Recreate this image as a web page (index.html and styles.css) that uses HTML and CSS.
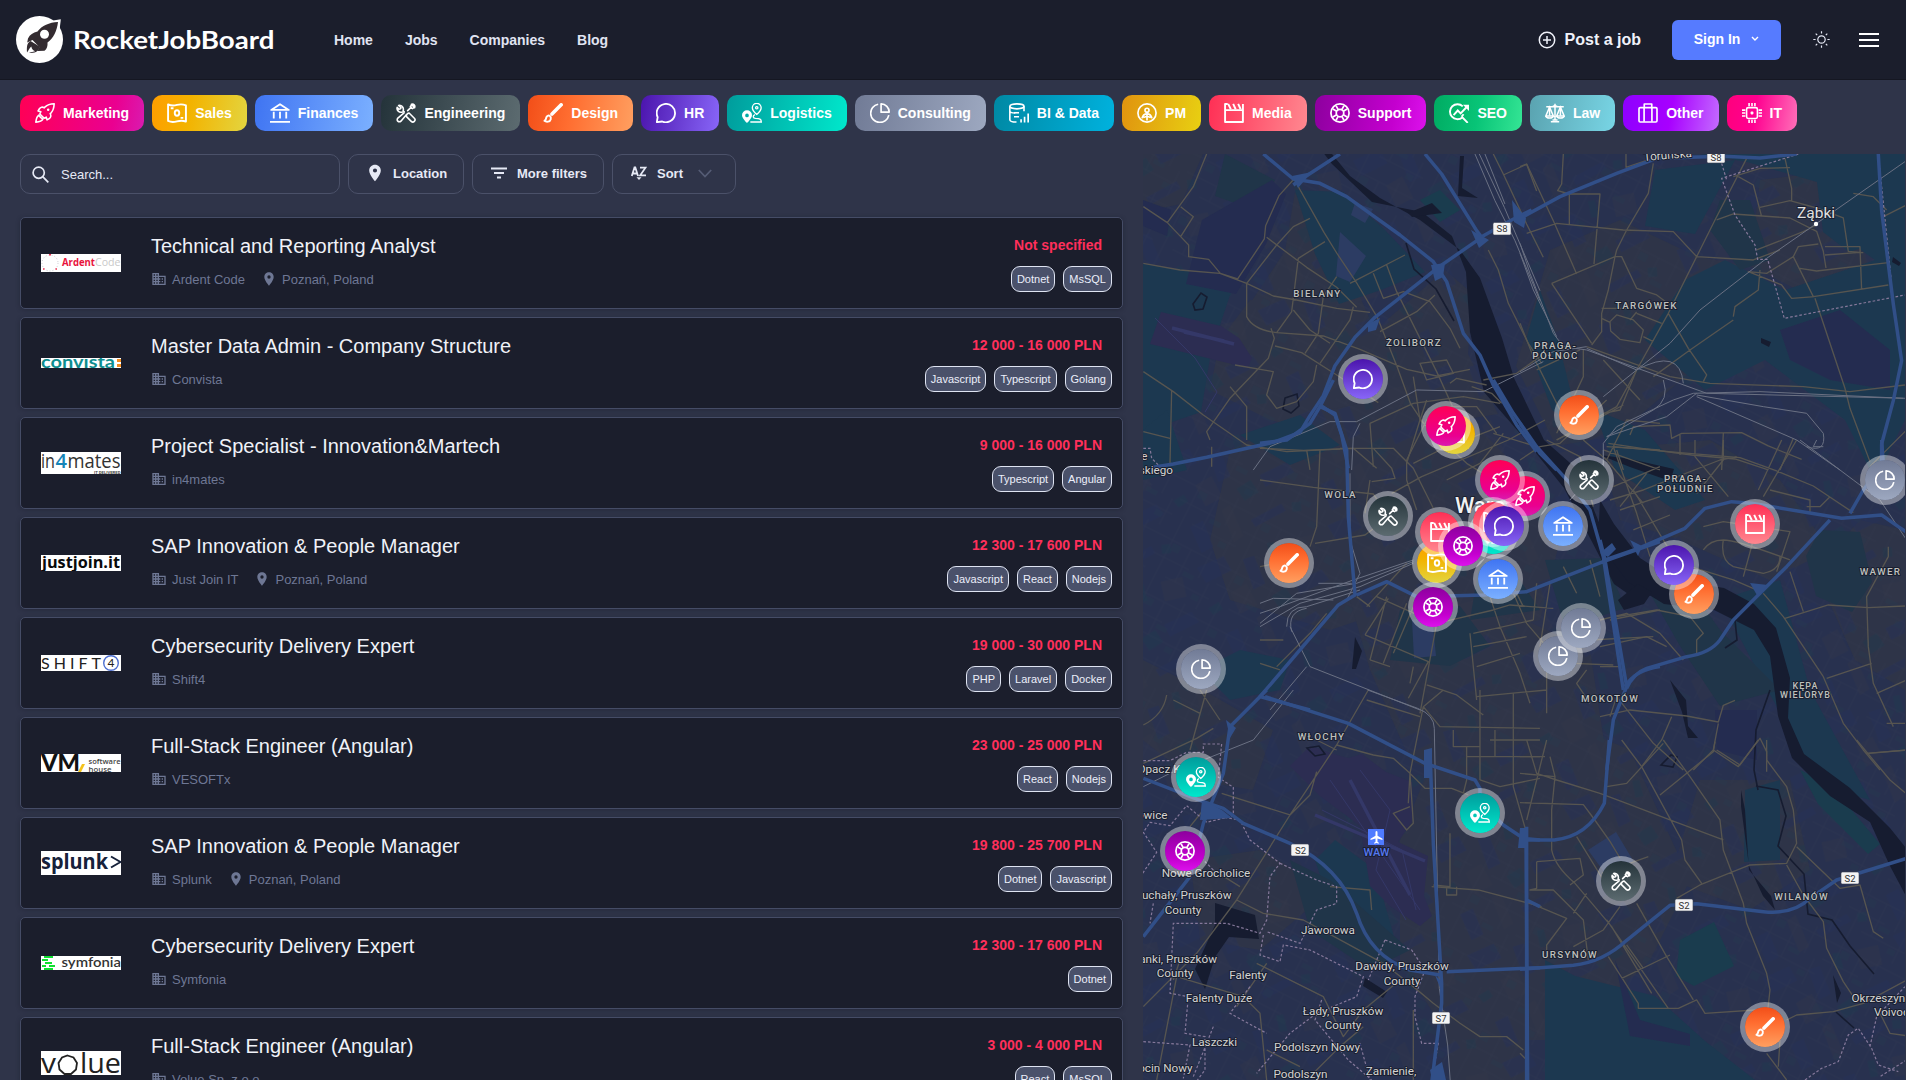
FILE: index.html
```html
<!DOCTYPE html>
<html lang="en">
<head>
<meta charset="utf-8">
<title>RocketJobBoard</title>
<link rel="stylesheet" href="styles.css">
</head>
<body>
<svg class="sprite" width="0" height="0" aria-hidden="true">
  <symbol id="i-marketing" viewBox="0 0 24 24"><g fill="none" stroke="currentColor" stroke-width="1.9" stroke-linejoin="round" stroke-linecap="round"><path d="M23 1c-4.600.2-8.300 1.300-10.800 3.600l-1 1.200C9 4.400 6.500 4.900 5.300 6.900L3.700 9.600l3.300.9-1.200 2.700 5 5 2.700-1.200.9 3.300 2.700-1.600c2-1.200 2.500-3.700 1.100-5.900l1.200-1C21.700 9.300 22.800 5.600 23 1z"/><path d="M4.700 14.600C2.600 15.500 1.500 18.400 1 23c4.600-.5 7.500-1.600 8.400-3.700M4.700 14.600l1.800 2.500M9.400 19.300 7 17.600"/></g><circle cx="15.800" cy="8.200" r="1.500" fill="currentColor"/></symbol>
  <symbol id="i-sales" viewBox="0 0 24 24"><g fill="none" stroke="currentColor" stroke-width="2.300" stroke-linejoin="round"><path d="M1.300 1.600c3.500 1.800 7 1.700 10.700.7s7.200-.9 10.700.6v19.300c-3.500-1.300-7-1.200-10.700-.2s-7.200 1.200-10.700-.5z"/><ellipse cx="12" cy="12" rx="2.700" ry="3.300"/><path d="M4.500 6.300h3.300M16.300 17.800h3.200"/></g></symbol>
  <symbol id="i-finances" viewBox="0 0 24 24"><g fill="none" stroke="currentColor" stroke-width="2.200"><path stroke-linejoin="round" d="M1.500 8.300 12 1.500l10.500 6.800z"/><path d="M4.500 10.500v8M12 10.500v8M19.500 10.500v8M0 22.700h24"/></g></symbol>
  <symbol id="i-engineering" viewBox="0 0 24 24"><g fill="none" stroke="currentColor" stroke-width="1.900" stroke-linejoin="round" stroke-linecap="round"><path d="m13.500 13 2.200-1 6.300 6.300a2.600 2.600 0 0 1-3.700 3.700L12 15.700z"/><path d="M9.800 10.300 8.500 9.500c.7-2.200.3-4-.9-5.200C6.400 3 4.800 2.500 3.100 2.900L6 5.700 5.500 7l-2 .5L1.400 5.300c-.5 1.700.1 3.300 1.300 4.500 1.300 1.300 3 1.600 5.200 1z"/><path d="m14 9.200 4.300-4.300M18.500 1.600 22.400 5.500M17.200 4.300l2-2.900c1.800-.6 3.900 1.500 3.300 3.300l-2.800 2c-.8-.3-1.500-.9-2-1.700M9.700 11.800l-7.500 6.300a2.600 2.600 0 0 0 3.700 3.700l6.500-7.600"/></g></symbol>
  <symbol id="i-design" viewBox="0 0 24 24"><path d="m21.800 2.200-11 11" stroke="currentColor" stroke-width="4.300" stroke-linecap="round" fill="none"/><path d="M8.300 15.600c-1.700-1.200-4-.2-4.400 2.100-.3 2-.9 3-2.200 3.600 2.300 1.800 6.700 1.500 7.600-1.900.4-1.500.1-2.900-1-3.800z" fill="none" stroke="currentColor" stroke-width="2.300" stroke-linejoin="round"/></symbol>
  <symbol id="i-hr" viewBox="0 0 24 24"><path d="M2 17A11 11 0 1 1 7.500 22.200L1 23z" fill="none" stroke="currentColor" stroke-width="2.200" stroke-linejoin="round"/></symbol>
  <symbol id="i-logistics" viewBox="0 0 24 24"><path fill="currentColor" fill-rule="evenodd" d="M6 8.700a6 6 0 0 0-6 6C0 18.500 6 24 6 24s6-5.500 6-9.300a6 6 0 0 0-6-6zm0 4a2.200 2.200 0 1 1 0 4.400 2.200 2.200 0 0 1 0-4.400z"/><g fill="none" stroke="currentColor" stroke-width="1.600"><path d="M17.700 13.700s5.300-4.500 5.300-8a5.300 5.300 0 0 0-10.600 0c0 3.500 5.300 8 5.300 8z"/><circle cx="17.700" cy="5.700" r="1.400"/><path d="M15.500 14c-3 1.200-2.500 4.300.7 4.500 5 .2 7 .6 7 4.300H10"/></g></symbol>
  <symbol id="i-consulting" viewBox="0 0 24 24"><g fill="none" stroke="currentColor" stroke-width="2"><path d="M9.800 1.500A11 11 0 1 0 22.600 14.500"/><path stroke-linejoin="round" d="M13.300 1v10H23A9.800 9.800 0 0 0 13.300 1z"/></g></symbol>
  <symbol id="i-bi" viewBox="0 0 24 24"><g fill="none" stroke="currentColor" stroke-width="1.900"><ellipse cx="9.500" cy="4" rx="8.500" ry="3"/><path d="M1 4v16c0 1.700 3.500 2.800 8 2.900M18 4v6M1 9.500c0 1.500 3 2.400 6.500 2.400M6 16.500h6"/><path d="M6 11.700h6"/></g><path stroke="currentColor" stroke-width="2" d="M14.500 23.500v-4M18.700 23.500v-7M23 23.500V12.500" fill="none"/></symbol>
  <symbol id="i-pm" viewBox="0 0 24 24"><g fill="none" stroke="currentColor" stroke-width="2"><circle cx="12" cy="12" r="10.900"/><circle cx="12" cy="8.700" r="2.400"/><path d="M6 18.500c1-4.300 3-5.500 6-5.500s5 1.200 6 5.500M12 13v8M7.500 17.500 12 16l4.500 1.500"/></g></symbol>
  <symbol id="i-media" viewBox="0 0 24 24"><g fill="none" stroke="currentColor" stroke-width="2.300" stroke-linejoin="round"><path d="M4.500 1.200H1.300v21.500h21.400V1.200M1.500 8.500h21"/><path d="m5 1 3.200 6.500M11 1l3 6.500M17 1l3 6.500"/></g></symbol>
  <symbol id="i-support" viewBox="0 0 24 24"><g fill="none" stroke="currentColor" stroke-width="2.100"><circle cx="12" cy="12" r="10.900"/><circle cx="12" cy="12" r="4.500"/><path d="M3.500 7.300 8 9.800M7.300 3.500 9.800 8M16.700 3.500 14.200 8M20.500 7.300 16 9.800M20.500 16.700 16 14.200M16.700 20.500 14.200 16M7.300 20.500 9.800 16M3.500 16.700 8 14.200"/></g></symbol>
  <symbol id="i-seo" viewBox="0 0 24 24"><g fill="none" stroke="currentColor" stroke-width="2.300"><path d="M16.500 4A9 9 0 1 0 16 17.300L22.500 23.800M15 16.500l2.500-3"/><path d="m5.500 14.500 5-5.500 3.500 3.500 7.500-8"/></g><path fill="currentColor" d="M24 2v7.500L16.700 2z"/></symbol>
  <symbol id="i-law" viewBox="0 0 24 24"><g fill="none" stroke="currentColor" stroke-width="1.800"><path d="M12 1v20M7 22.500h10M9 20.500h6M1.500 4.500h21M12 3l-3 1.500h6zM5.500 5 1 15.500h9zM18.500 5 14 15.500h9z"/><path d="M1 15.500c.5 3.500 8.500 3.500 9 0M14 15.500c.5 3.500 8.500 3.500 9 0M5.500 5v10M18.500 5v10"/></g></symbol>
  <symbol id="i-other" viewBox="0 0 24 24"><g fill="none" stroke="currentColor" stroke-width="2" stroke-linejoin="round"><rect x="1.200" y="5.500" width="21.600" height="17.300" rx="1.500"/><path d="M7.500 5V1.200h9V5M7.300 5.500v17M16.700 5.500v17"/></g></symbol>
  <symbol id="i-it" viewBox="0 0 24 24"><g fill="none" stroke="currentColor" stroke-width="1.900"><rect x="5.500" y="5.500" width="13" height="13" rx="2"/><path d="M8.500 0v4M12 0v4M15.500 0v4M8.500 20v4M12 20v4M15.500 20v4M0 8.500h4M0 12h4M0 15.500h4M20 8.500h4M20 12h4M20 15.500h4"/></g><rect x="10.300" y="10.300" width="3.400" height="3.400" rx="1" fill="currentColor"/></symbol>
  <symbol id="i-building" viewBox="0 0 24 24"><path fill="currentColor" d="M12 7V3H2v18h20V7H12zM6 19H4v-2h2v2zm0-4H4v-2h2v2zm0-4H4V9h2v2zm0-4H4V5h2v2zm4 12H8v-2h2v2zm0-4H8v-2h2v2zm0-4H8V9h2v2zm0-4H8V5h2v2zm10 12h-8v-2h2v-2h-2v-2h2v-2h-2V9h8v10zm-2-8h-2v2h2v-2zm0 4h-2v2h2v-2z"/></symbol>
  <symbol id="i-pin" viewBox="0 0 24 24"><path fill="currentColor" d="M12 2C8.130 2 5 5.130 5 9c0 5.250 7 13 7 13s7-7.750 7-13c0-3.870-3.130-7-7-7zm0 9.500a2.500 2.500 0 0 1 0-5 2.500 2.500 0 0 1 0 5z"/></symbol>
</svg>

<header class="topbar">
  <a class="brand">
    <svg width="47" height="47" viewBox="0 0 47 47"><circle cx="23.500" cy="23.500" r="23.500" fill="#fff"/><path d="M31 5.500 44.800 3.300 43 19z" fill="#fff"/><path d="M42 6C33 6.500 26 9.500 21.500 15.500c-4.500 1-7.500 3-9.500 7l-.8 4 5.300-2.600 6.800 7L21.500 35l7-.3c2.500-1.700 3.300-4.500 3-8.200C37.500 22 41 15 42 6z" fill="#332b30"/><circle cx="28.500" cy="18.200" r="4.500" fill="#fff"/><path d="M14.500 25c-4 2-3.700 7-3.500 11.500 1.500-2 2.500-4.500 4.300-6 .5 2.500 1.700 4 3.900 4.800-2 .7-4.200 1-6.200 1.500 6 .8 10-1.300 10.500-6.300z" fill="#332b30"/></svg>
    <svg class="brand-name" width="204" height="32" viewBox="0 0 204 32"><text x="-1" y="24.500" textLength="201.500" lengthAdjust="spacingAndGlyphs">RocketJobBoard</text></svg>
  </a>
  <nav class="nav"><a>Home</a><a>Jobs</a><a>Companies</a><a>Blog</a></nav>
  <div class="actions">
    <a class="post"><svg width="18" height="18" viewBox="0 0 18 18" fill="none" stroke="currentColor" stroke-width="1.500"><circle cx="9" cy="9" r="7.700"/><path d="M9 5v8M5 9h8"/></svg>Post a job</a>
    <button class="signin">Sign In<svg width="8" height="6" viewBox="0 0 8 6" fill="none" stroke="currentColor" stroke-width="1.400"><path d="m1 1 3 3 3-3"/></svg></button>
    <svg class="sun" width="17" height="17" viewBox="0 0 17 17" fill="none" stroke="currentColor" stroke-width="1.200"><circle cx="8.500" cy="8.500" r="3.700"/><path d="M8.500.3v2.300M8.500 14.400v2.300M.3 8.500h2.300M14.400 8.500h2.300M2.700 2.700l1.500 1.500M12.800 12.800l1.500 1.500M14.300 2.700l-1.500 1.500M4.200 12.800l-1.500 1.500"/></svg>
    <div class="burger"><i></i><i></i><i></i></div>
  </div>
</header>

<div class="chips">
  <a class="chip marketing"><svg><use href="#i-marketing"/></svg>Marketing</a>
  <a class="chip sales"><svg><use href="#i-sales"/></svg>Sales</a>
  <a class="chip finances"><svg><use href="#i-finances"/></svg>Finances</a>
  <a class="chip engineering"><svg><use href="#i-engineering"/></svg>Engineering</a>
  <a class="chip design"><svg><use href="#i-design"/></svg>Design</a>
  <a class="chip hr"><svg><use href="#i-hr"/></svg>HR</a>
  <a class="chip logistics"><svg><use href="#i-logistics"/></svg>Logistics</a>
  <a class="chip consulting"><svg><use href="#i-consulting"/></svg>Consulting</a>
  <a class="chip bi"><svg><use href="#i-bi"/></svg>BI &amp; Data</a>
  <a class="chip pm"><svg><use href="#i-pm"/></svg>PM</a>
  <a class="chip media"><svg><use href="#i-media"/></svg>Media</a>
  <a class="chip support"><svg><use href="#i-support"/></svg>Support</a>
  <a class="chip seo"><svg><use href="#i-seo"/></svg>SEO</a>
  <a class="chip law"><svg><use href="#i-law"/></svg>Law</a>
  <a class="chip other"><svg><use href="#i-other"/></svg>Other</a>
  <a class="chip it"><svg><use href="#i-it"/></svg>IT</a>
</div>

<main class="content">
  <section class="listing">
    <div class="filters">
      <div class="search"><svg width="17" height="17" viewBox="0 0 17 17" fill="none" stroke="currentColor" stroke-width="1.700"><circle cx="6.700" cy="6.700" r="5.600"/><path d="m10.700 10.700 5.600 5.600"/></svg><span>Search...</span></div>
      <button class="filter location"><svg width="20" height="20"><use href="#i-pin"/></svg>Location</button>
      <button class="filter more"><svg width="16" height="12" viewBox="0 0 16 12" stroke="currentColor" stroke-width="1.800"><path d="M0 1.500h16M3 6h10M6 10.500h4"/></svg>More filters</button>
      <button class="filter sort"><svg width="16" height="14" viewBox="0 0 16 14"><g fill="none" stroke="currentColor" stroke-width="1.800"><path d="M.8 10 3.500 1.500h.8L7 10M1.800 7.500h4.200M9 1.700h5.500L9.200 9.300h5.800"/></g><path d="M5.500 11.300h5L8 14z" fill="currentColor"/></svg>Sort<svg class="caret" width="14" height="9" viewBox="0 0 14 9" fill="none" stroke="currentColor" stroke-width="1.800"><path d="m.8 1 6.200 6.500L13.200 1"/></svg></button>
    </div>

    <div class="jobs">
      <article class="job">
        <svg class="logo" width="80" height="18"><circle cx="9" cy="9" r="8" fill="none" stroke="#c9c9cf" stroke-dasharray="1 2"/><path d="M8 .7h2M2 15h1.500M14.500 15H16" stroke="#f03050" stroke-width="1.500"/><text x="21" y="12" font-family="Open Sans" font-weight="700" font-size="10" fill="#e8133c" textLength="33" lengthAdjust="spacingAndGlyphs">Ardent</text><text x="54" y="12" font-family="Open Sans" font-size="10" fill="#c9c9c9" textLength="25.500" lengthAdjust="spacingAndGlyphs">Code</text></svg>
        <div class="info"><h2>Technical and Reporting Analyst</h2><p><svg><use href="#i-building"/></svg><span>Ardent Code</span><svg class="pin"><use href="#i-pin"/></svg><span>Poznań, Poland</span></p></div>
        <div class="side"><strong>Not specified</strong><div class="tags"><span>Dotnet</span><span>MsSQL</span></div></div>
      </article>
      <article class="job">
        <svg class="logo" width="80" height="10"><text x="0" y="9.500" font-family="Lato" font-weight="700" font-size="17" fill="#0e8d8f" textLength="74" lengthAdjust="spacingAndGlyphs">convısta</text><path d="M76 1h4v3h-4zM76 6h4v3h-4z" fill="#f28c1e"/></svg>
        <div class="info"><h2>Master Data Admin - Company Structure</h2><p><svg><use href="#i-building"/></svg><span>Convista</span></p></div>
        <div class="side"><strong>12 000 - 16 000 PLN</strong><div class="tags"><span>Javascript</span><span>Typescript</span><span>Golang</span></div></div>
      </article>
      <article class="job">
        <svg class="logo" width="80" height="22"><g font-family="Open Sans" font-size="20"><text x="0" y="16" fill="#333" font-weight="500" textLength="14" lengthAdjust="spacingAndGlyphs">in</text><text x="14.500" y="16" fill="#1685b8" font-weight="600" textLength="11.500" lengthAdjust="spacingAndGlyphs">4</text><text x="26.500" y="16" fill="#333" font-weight="500" textLength="53" lengthAdjust="spacingAndGlyphs">mates</text></g><text x="53" y="21.500" font-family="Roboto" font-size="4" font-weight="700" fill="#444" textLength="26.500" lengthAdjust="spacingAndGlyphs">IT DELIVERED</text></svg>
        <div class="info"><h2>Project Specialist - Innovation&amp;Martech</h2><p><svg><use href="#i-building"/></svg><span>in4mates</span></p></div>
        <div class="side"><strong>9 000 - 16 000 PLN</strong><div class="tags"><span>Typescript</span><span>Angular</span></div></div>
      </article>
      <article class="job">
        <svg class="logo" width="80" height="16"><text x="1" y="13" font-family="Open Sans" font-weight="700" font-size="16" fill="#0a0a0a" textLength="78" lengthAdjust="spacingAndGlyphs">justjoin.it</text></svg>
        <div class="info"><h2>SAP Innovation &amp; People Manager</h2><p><svg><use href="#i-building"/></svg><span>Just Join IT</span><svg class="pin"><use href="#i-pin"/></svg><span>Poznań, Poland</span></p></div>
        <div class="side"><strong>12 300 - 17 600 PLN</strong><div class="tags"><span>Javascript</span><span>React</span><span>Nodejs</span></div></div>
      </article>
      <article class="job">
        <svg class="logo" width="80" height="16"><text x="0" y="13.500" font-family="Lato" font-size="16" fill="#222" textLength="60" lengthAdjust="spacing">SHIFT</text><circle cx="70" cy="8" r="7.300" fill="none" stroke="#4d6fd0" stroke-width="1.400"/><text x="66.500" y="12" font-family="Lato" font-size="12" fill="#222">4</text></svg>
        <div class="info"><h2>Cybersecurity Delivery Expert</h2><p><svg><use href="#i-building"/></svg><span>Shift4</span></p></div>
        <div class="side"><strong>19 000 - 30 000 PLN</strong><div class="tags"><span>PHP</span><span>Laravel</span><span>Docker</span></div></div>
      </article>
      <article class="job">
        <svg class="logo" width="80" height="18"><text x="0" y="17" font-family="Lato" font-weight="900" font-size="23" fill="#111" textLength="39" lengthAdjust="spacingAndGlyphs">VM</text><path d="m37 18 4-8h3l-4 8z" fill="#f5c21b"/><g font-family="Open Sans" font-size="7" font-weight="600" fill="#444"><text x="47.500" y="9.500" textLength="32" lengthAdjust="spacingAndGlyphs">software</text><text x="47.500" y="17.500" textLength="23" lengthAdjust="spacingAndGlyphs">house</text></g></svg>
        <div class="info"><h2>Full-Stack Engineer (Angular)</h2><p><svg><use href="#i-building"/></svg><span>VESOFTx</span></p></div>
        <div class="side"><strong>23 000 - 25 000 PLN</strong><div class="tags"><span>React</span><span>Nodejs</span></div></div>
      </article>
      <article class="job">
        <svg class="logo" width="80" height="24"><text x="0" y="18" font-family="Open Sans" font-weight="700" font-size="22" fill="#16213a" textLength="67" lengthAdjust="spacingAndGlyphs">splunk</text><path d="m70 5.500 9.500 5.500-9.500 5.500" fill="none" stroke="#16213a" stroke-width="2"/></svg>
        <div class="info"><h2>SAP Innovation &amp; People Manager</h2><p><svg><use href="#i-building"/></svg><span>Splunk</span><svg class="pin"><use href="#i-pin"/></svg><span>Poznań, Poland</span></p></div>
        <div class="side"><strong>19 800 - 25 700 PLN</strong><div class="tags"><span>Dotnet</span><span>Javascript</span></div></div>
      </article>
      <article class="job">
        <svg class="logo" width="80" height="14"><path d="M3 1h9M1 4h6M4 7h7M8 10h6M1 10h4M3 13h9" stroke="#10e030" stroke-width="2"/><text x="20.500" y="11" font-family="Lato" font-size="14" font-weight="600" fill="#333" textLength="59.500" lengthAdjust="spacingAndGlyphs">symfonia</text></svg>
        <div class="info"><h2>Cybersecurity Delivery Expert</h2><p><svg><use href="#i-building"/></svg><span>Symfonia</span></p></div>
        <div class="side"><strong>12 300 - 17 600 PLN</strong><div class="tags"><span>Dotnet</span></div></div>
      </article>
      <article class="job">
        <svg class="logo" width="80" height="24"><g font-family="Open Sans" font-size="27" fill="#222"><text x="0" y="22" textLength="15" lengthAdjust="spacingAndGlyphs">v</text><text x="39" y="22" textLength="41" lengthAdjust="spacingAndGlyphs">lue</text></g><path d="m26.500 4.500 6 2 3.500 5.500-1 6.500-5 4.500h-6.500l-5-4.500-1-6.500 3.500-5.500z" fill="none" stroke="#222" stroke-width="1.800"/></svg>
        <div class="info"><h2>Full-Stack Engineer (Angular)</h2><p><svg><use href="#i-building"/></svg><span>Volue Sp. z o.o.</span></p></div>
        <div class="side"><strong>3 000 - 4 000 PLN</strong><div class="tags"><span>React</span><span>MsSQL</span></div></div>
      </article>
    </div>
  </section>

  <section class="map">
    <svg class="tiles" viewBox="1143 154 762 926" width="762" height="926">
      <defs>
        <pattern id="parcels" width="137" height="113" patternUnits="userSpaceOnUse" patternTransform="rotate(-18)">
          <path fill="#25305a" d="M4 6l29-3 3 16-28 4zM50 12h12l2 30-13 2zM92 50l30-4 4 12-32 5zM10 78l14-2 2 28-13 2zM70 90l34-6 2 8-34 6z"/>
          <path fill="#323649" d="M28 40l18-4 4 24-19 3zM102 8l22 2-2 20-22-2zM45 72l10-3 3 34-11 3z"/>
          <path fill="#1f3a4e" d="M78 4l7 1-1 17-8-1zM2 48l12-3 2 8-11 3zM114 86l9 2-2 9-9-2zM66 56l16-4 4 14-16 4z"/>
        </pattern>
        <pattern id="blocks" width="71" height="59" patternUnits="userSpaceOnUse" patternTransform="rotate(27)">
          <path fill="none" stroke="#3c4156" stroke-width=".6" d="M0 8h71M0 27h40M22 44h49M12 0v59M33 8v36M52 0v30M64 30v29"/>
          <path fill="#263a50" d="M14 10h9v8h-9zM54 46h8v6h-8zM36 30h12v5H36z"/>
        </pattern>
      </defs>
      <rect x="1143" y="154" width="762" height="926" fill="#28314f"/>
      <!-- built-up land -->
      <g fill="#2e3448">
        <path d="M1143 154h60l-22 50-38 8zM1295 192l32 50 30 48 20 45-20 30-60 0-40-12-12-42 40-60zM1250 300l80 10 60 20 20 50-60 60-80-20-60-30 10-50zM1375 330l70-60 28 24-5 60 30 60-60 10-50-20z"/>
        <path d="M1230 450l70-35 80-15 90 20 60 60 30 60-20 80-90 20-60-30-60 20-100-30-20-60zM1550 250l70-30 76 36 50 10-60 110-70 60-60 10-40-80zM1760 180l80-10 50 40v80l-80 6-60-30zM1600 450l110-10 70 40 50 70-60 30-90-40-60-20zM1860 520l45 10v160l-50-30-40-90z"/>
        <path d="M1350 600l110-10 130 60 20 130-100 30-100-50-40-90zM1143 660l60 30 70 40-20 60-60-10-50-40zM1440 740l120-20 70 30 60 130-40 80-80 80-120 0-50-80 0-120zM1700 780l90 0 20 90-60 40-80-30zM1190 860l70-10 70 40-70 60-60-10zM1440 980l80-10 10 110-80 0z"/>
      </g>
      <rect x="1143" y="154" width="762" height="926" fill="url(#parcels)" opacity=".4"/>
      <rect x="1143" y="154" width="762" height="926" fill="url(#blocks)" opacity=".3"/>
      <!-- woodland and parks -->
      <g fill="#1c3850">
        <path d="M1295 190l48 2 42 38 40 42-44 18-42 14-24-50zM1143 264l50 8 38 20-20 60-10 60-58 20zM1700 154h205v80l-56 18-26-20-6-50-70-20zM1840 235l65-15v200l-30 60-30-60-80-60-60 30-60-50 40-60 40-20 60 30 90-30zM1655 170l80-10-40 74-50-8z"/>
        <path d="M1545 960l30 16 80 20 50 45 50 39h-210zM1720 600l60-20 30 110 60 110-50-14-60-110zM1335 840l40 30 20 70-20 10-40-30-20-60zM1200 670l40-20 50 10-10 30-50 10zM1240 435l60-20 40 30-50 20zM1540 290l18 50 22 90-28-20-26-70zM1745 790l35-10 0 80-36 2zM1595 410l50 20 60 70-30 10-60-40zM1143 430l24-20 20 60-44 10z"/>
      </g>
      <g fill="#203549">
        <path d="M1225 154l50 26-20 30-40-14zM1820 530l40 2 12 50-20 30-36-16-10-40zM1670 560l50 70 60 60-60 16-40-60-40-70zM1400 610l60-4 30 40-40 20-60-6zM1545 560l60-2 20 50-60 20zM1290 860l40 20 80 70-40 20-60-40zM1720 200l30 0 20 60-30 10-30-40zM1480 560l40 20 20 30-70 10z"/>
      </g>
      <g fill="#1a3c4e"><path d="M1680 940l34-18 20 44-40 20-18-10zM1420 200l20-10 20 20-20 12zM1800 770l30 14 50 60-12 10-50-50z"/></g>
      <g fill="#242c50">
        <path d="M1202 220l70-40 14 14-20 50-30 50-50-10zM1780 330l60-20 50 40 0 40-60-10-40-20zM1615 960l25 60 50 14v12l-60-10zM1560 470l30 0 20 30-30 10zM1715 710l42 0 0 50-40-10zM1143 200l28 10-4 26-24-10z"/>
      </g>
      <g fill="#2c3c63"><path d="M1340 232l26 24-16 26-14-6zM1355 203l18 6-8 14-14-8zM1588 850l28-18 18 30-30 10zM1412 620l20-4 4 40-22 2z"/></g>
      <!-- airports -->
      <g fill="#2c2d52"><path d="M1348 758l14-4 24 18 26 10 0 40-14 20 30 14-4 40 8 20-12 10-30-20-20-20-10-60-40-30-30-30 20-20 30 10zM1161 312l60 14 18 12 13 20-4 10-98-24z"/></g>
      <g fill="none" stroke="#343868"><path stroke-width="3.500" d="M1350 780l60 115M1315 815l110 46M1172 328l62 16M1184 332l40 9"/><path d="M1330 780l90 130M1322 810l80 40 14 60M1360 770l30 40-14 60 30 50M1155 318l40 40 22 34-12 20"/></g>
      <!-- water -->
      <g fill="#161c30">
        <path d="M1318 154h14l18 22 30 22 40 22 40 30 20 28 22 60 12 40 30 62 34 30 24 60 42 56 16 8-26 4-20-14-24-46-26-50-40-50-40-46-14-60-4-60-14-36-30-24-50-10-40-38-20-26z"/>
        <path d="M1600 500l14 24 26 34 34 22 50 8 30 16 22 24 14 50-2 40 16 36 46 34 40 40 16 20v48l-16-30-20-44-40-26-38-38-14-42-8-60-16-26-40-20-50-6-36-22-30-40z"/>
        <path d="M1618 600l20-16 14 8-8 12-20 6zM1670 680l16 20 2 26 10 12-10 0-6-26zM1215 903l40 12 4 24-30-2-14 20-10 32-10-20 20-44zM1365 978l22 14-4 6-20-12zM1741 790l4 20 4 60 22 26 4 14-12-14-14-30-8-60zM1460 156l4 0-2 32 16 10-20-2zM1408 213l24-10 10 10-30 4zM1833 975l8 18-4 10zM1893 257l8 6-2 3-7-4zM1761 338l10 4-2 5-8-4z"/>
        <path d="M1355 637l7 14-6 18-4 0zM1600 455l30 4 44 10-4 12-40-14z"/>
      </g>
      <g fill="none" stroke="#161c30" stroke-width="1.600"><path d="M1193 304l8-11 6 4-4 12-8 1zM1285 398l12-4 2 12-8 7-8-4zM1307 748l12-2 6 8-10 2zM1406 243l8 26 22 20 18 32M1661 765l10-10 6 2-4 10zM1756 786l22 4 8 26-8 30 26 28 4 40 24 6 18 26 24 28M1735 620l2 20-12 8M1770 690l-14 40-2 40 4 20M1836 1012l18 16"/></g>

      <!-- local streets, drawn per district -->
      <g fill="none" stroke="#575550" stroke-width="4" stroke-linejoin="round">
        <g transform="translate(1140 150) scale(.3333)">
          <path d="M200 12 160 110 82 218l40 42 24 25v35l60 8 35 42 52 17 80-120 4-40 40-90 45-50 90 160 40 65 60 90 60 100 60 150 40 110 40 60M10 170l72 48M122 170l38 30-38 60M10 340l110 20 120 10 80 30 80 38 70 12 120 25 100 12M320 400v100q20 40 90 48l140 10 110 40 140 60 90 20 100-20M380 262l120 90 90 60 60 60M320 400l90-115 50-55 50-25M410 548 455 485l10-80 10-80 80-50M460 480l50 60 60 40M590 380l-40 60-15 110-40 60M640 470l-10 40-90 130M630 400l165-85M740 345l30 80 120 240 50 110M700 370l30 75 60-20 80 30 60 80 30 60M720 545l110-60 55-50"/>
          <path d="M10 665l90 60 90 70 130 90 120 20 200-10 70 60M95 720l-5 220M10 845l80 20M210 870l-10-25 70-100 115-120 18-60-10-30M285 645l115 20-20 70 30 40 60-20 50-60 10-50M270 710l50 60v100M405 588l80 20 110 70 120 80M690 820l10 130M690 820l130-60 150-20 110 20M840 640l80-10 20 40-80 20zM820 680l20 130-40 130M930 700l20-15 90 20M1085 760l-30-30-60-20M215 890v60M500 900l10 60"/>
          <path d="M1060 12l30 60 70 150 50 100M1090 75l70-32 30 80M1045 300l30 60 30 100 60 120 40 60M1030 690l100-20 70-50"/>
        </g>
        <g transform="translate(1520 150) scale(.3333)">
          <path d="M0 50l20-8 80 170 70 160M130 12l-5 90-12 20 35 10 0 90M128 132h112l-18 210M20 250l90-30 200 20 150 5 70 75 170 10 80-30M318 12v40l60-20M400 40 385 130l-65 110-30 60-5 20-190 80M95 400l120 180M285 320h20l45 95 60 20 40 30M680 25 585 210 530 320 445 490 350 660 290 770 110 870M285 320 265 420l-20 70v55l-30 40M245 475h85M270 515l20-20 50 15 30 30-10 38-60-10-28-25zM245 505l25 12M330 510l20-24M370 560l30 15M350 490l75 30M445 490l60 105 55 80-10 20M400 680l110-80 130-90M720 360l-5 60-70 50-5 30M710 300l140-55 40-20M590 210l50-18 170 12 80 40 20 60 8 50M720 172l90-20 80 22 80 30 15 100 45 4M655 80l45 25 25 95M795 25l20 90 0 40M915 290h105l5 130M915 315l105-8M840 355l50 8 215-25M820 320l60 120 225-35M820 320 740 370l-55-5 100 40 30 40 70-5M885 445l90 270 15 60 30 80 30 80M820 320l15-30 60-8M1000 130l60 10 40 40M1090 200l70-35M640 80l80-25 90-2"/>
          <path d="M200 590l250 90 120 20 280 10 140 15 165-20M0 520l40 100 100 200M50 660l130-60M110 870l60-30 140-75M250 790l50-10 50-120M265 880l100 15 150 20 130 12 100 33M330 855l10-25 110-5 5 40 30-15 180-2 80 40 100 40M480 855v60M610 850l-5 110M820 865l-40 95M290 900l20 60M0 930l60-40 60-10 140-130M190 600l0 80-80 170M250 630l110 120M1050 950l110-110"/>
        </g>
        <g transform="translate(1260 380) scale(.3333)">
          <path d="M0 205l130 6 110-4M0 300l160 22 180 20 40 60M150 500l20-60 10-230M165 490l150-25 80-60M340 205l55 60 10 30-70 10M330 300l-15 100M240 205h160l60 60 60 120M440 240l60-120 60-40 90 0 60 80M440 240v60l30 90M500 60l-20 60 140 130 130 80M460 250l80-40 180-70M560 300l100-50 70-90M700 160l130 40 60 70M395 340l90-50 260-110 110-60M0 560l50-10M320 680l120-130M315 765l190 80-60 110M380 650l-50 190M440 670l-70 180M315 765l70-110M460 680l-60 140M350 650l180 80-50 270M500 915l90 30 80 60M450 910l10-50M530 730l170-40M630 760l20 200M640 760l180-40M640 800l160-30M650 860l130-40M650 950l210-20M690 650l30 90 60 140 30 90M760 640l40 90 60 70v200M830 610l-10 110M870 610l-30 190M760 620l30 60M700 690l50-15 130 10M940 850l120 5M990 780l190-10M1050 720l150-30M990 540l30 110M910 560l40 80M0 850l60 20M330 840l60 20M200 700l-50 60-100 100M0 780h70M290 650l40 30M980 870l-30 40 40 60M970 180l70 60 110 130M1040 240l60-120 100 10M1060 320l140-60M1030 210l170 60M1040 200l160 10M860 180l100 50 40 150M1080 380l80-100"/>
        </g>
        <g transform="translate(1600 440) scale(.3333)">
          <path d="M40 20l200 18 180 15 110 40 110 45 120 80M40 20l70 200 40 130M30 180l100-30 230-90 50-10M100 150l120 200M60 210l120-40M100 270l110-45M285 0v50l100 120M370 0v60l-80 100M545 0l-70 150M590 0l-100 170M510 150l120 30v40M310 260l60-15 200 30-20 60-20 60M310 330q20-30 60-30t200 60M370 300q-10 60 30 80l90 20q50-10 50-50M460 300l-30 110M690 170l-30 30h-40M240 370l160 50 70 30M490 460l60 70 120 180 60 140 60 80 50 60M555 535l130-40 120 8 110-5M570 395l40 120M865 320v30l-65 120 5 150 15 110 60 130M680 715l135-45M830 760l90-40M860 850h60M800 940l120-10M0 540l80-20 100 60 70 80M0 620l140-30 60 30M50 530l120-20 100 20 40 50-20 20v45M30 830l20-60 110 140 90 80M0 830l90-20 170 18 95 18 15-50 35-15M215 830l-30 70-60 80M350 930l70 45 60-80 20 40v60M355 850l-15 80-60 60M0 680h60"/>
        </g>
        <g transform="translate(1140 690) scale(.3333)">
          <path d="M10 220l160-75 50-30M200 0l-50 180M180 0l60 90M100 30l80 40M10 105q60-30 70-90M685 0 590 165 450 375 290 630 170 790 10 950M590 165l110 30 60 10 45 40 50 50 80 0 50 20M245 310l205 65 60-60 20-70M530 150l60 30M680 30l160 50M850 50l-40 200-5 90M850 50l50 60 300 5M850 50l60-50M940 120v50h80M1065 120v80M980 170v100l-10 40M980 200h220M1020 0v270M1120 10v280l40 140M1020 270l60 20 120-25M810 250l10 150-20 20-40-50 50-20M930 430v160l-50-5M875 590l140 10 190 50M920 590v25h30v-25M150 410l40-50M220 540l80 50M290 630l80 40 120 20 130 70 110 60 90 70 60 50 80 60 60 40 80 0 50 40M350 820l200 100 60 120 60-80 110-90M100 870l20-60M110 860l200 60 50 50 20 200M110 860l-60 310M520 1150l80-80 70-60M380 1080l100 50M570 590l120 10 5 60M1200 150h-150M380 820l-90 130M820 960v210"/>
        </g>
        <g transform="translate(1520 740) scale(.3333)">
          <path d="M20 0l30 100 60 20 130 40 80 30 130 50 160 60M80 0l-60 240M0 100l105 10-10 100v120q10 50 70 100l110 130 120 200M0 188l190 6 30 40 50 70 30 50M75 50H0M105 110l-15-60M50 365l130-10 10 50-40 30M50 365v80l-20 5 70 0 90 90 15 120M20 485l120 50-60 80v20M300 500l-50 70-90 50M305 0l60 80 60 110 60 110 10 60 50 70M430 0l80 110 90 130 10 90 60 160 10 60 60 150 10 50-10 90M260 140l60-10 110-120M420 165l160-130 5-30M580 30l75 50 60-80M740 0v60l60 80 20 70 10 100-30 60-110 5-150 60-70 40M830 320l130 125 60-10 40 140 30 20M800 375l50 90 60 80 10 80 50 100 40 60M1010 0l100 120 60 50M1045 40l120-10M350 490l90 160 80 130M265 650l90 140v15h90L260 540M305 715l145-70M370 685l-50-70M445 805h30l55-25 25 40 150-10 60 0M240 150M245 400l140-50M170 290l80 130M200 460l-40 60M740 940l60 80M780 900l-5 80M800 840l30-15 110-10 90-25 140-75M1080 820l30 60 70 10M0 940l20 20"/>
        </g>
      </g>

      <!-- railways -->
      <g fill="none" stroke="#6a7083" stroke-width="3">
        <g transform="translate(1140 150) scale(.3333)"><path d="M1005 12l60 140 60 120 75 180M1018 12l75 160 107 250M1035 12l60 150M340 960l50-70 180-75h80l180-95 200 5 180-90M635 960l5-100 20-40"/></g>
        <g transform="translate(1520 150) scale(.3333)"><path d="M0 280l30 90 70 180 30 40 70 10 250 90 110 40 600 15M0 310l40 110 70 140M0 665l100-60 100-15M1155 35 740 325 540 480 450 580 350 660 250 740M200 595l150 65M350 660q130-70 140 40M250 960v-80l40-50 170-80 60-20 200-5 430 20M260 860l180-60 90-70M530 735l200 35 130 20 50 60q10 60-50 40M430 690q20 60-30 90l-140 80M530 740l300 130 130 90"/></g>
        <g transform="translate(1260 380) scale(.3333)"><path d="M0 740l120-70 180-50 160-70M0 730l110-90 180-30 170-65M0 700l60-20 220-80 180-60M0 670l40-15 180 5M175 610h100M80 740q0-60 60-60l160-50M95 755q-15-60 45-70M90 740l60 120 330 130M270 280v200l30 100-40 80M140 860l-110 130M1030 210v40l-100 110"/></g>
        <g transform="translate(1140 690) scale(.3333)"><path d="M683 0l150 55q50 20 50 60l15 780 25 170 8 110M10 290l80-40 250-100 120-150"/></g>
        <g transform="translate(1600 440) scale(.3333)"><path d="M600 0l160 120 80 60 80 120M650 0l-10 20 30 0"/></g>
      </g>

      <!-- administrative borders -->
      <g fill="none" stroke="#85789a" stroke-width="3.600" stroke-dasharray="8 6">
        <g transform="translate(1520 150) scale(.3333)"><path d="M835 12 605 85l40 110 60 90 8 43h30l50 177 362-70M605 40l15 50M1075 12l40 390"/></g>
        <g transform="translate(1140 690) scale(.3333)"><path d="M10 212h80l50-25h50v-25h55l-10 100 45 30v85l-80 20-60-50-50 60-60-10-20 30 40 60-60 90M240 380l60 10 30 60 90 70-30 40-10 130-20 40-100-30-160 0-10 210 55 10-10 110 60 10 0 100-60 80M420 520l110 50 60 20v50l-60 20-50 100-100-35M370 735l-10 60 60 20 10-50 80 15 160 80-20 60-120 50-80 60-100 120M735 750l-50 120M735 750l80 30 40 60-30 80v60l20 80 50 0-20 110M545 930l-20 60 100 120 70 60M10 1055l140 10-20 100M330 890l-60 80 110 60M220 1010l-60 150M660 1060l30 110M40 640l-10 60M220 540l-30-30"/></g>
        <g transform="translate(1520 740) scale(.3333)"><path d="M855 1020l50-35 50-20 30-80 30-20 40 60 20 50 60 20M1050 920l20-90 85-90M1160 960l-80 50"/></g>
        <path transform="translate(1140 150) scale(.3333)" d="M10 895h20l5 30 30 30"/>
      </g>

      <!-- expressways -->
      <g fill="none" stroke="#314f88" stroke-width="10.500" stroke-linejoin="round">
        <g transform="translate(1140 150) scale(.3333)"><path d="M370 12l90 75 40-10 100-65M460 105l20-15 60 10 80 40 160 115 100 80 40 60 50 155 50 65 40 90 70 120 60 80M855 12l50 60 105 170 15 20-130 90-50 40-140 110-60 60-60 85-35 90-40 60-30 50-80 30-200 45-100 20-60 10M540 765l45 30 20 60 20 100M1025 260l90-50 60-30"/></g>
        <g transform="translate(1520 150) scale(.3333)"><path d="M0 205l120-65 170-70 120-45 200-6 110 5 110-12M1075 12l10 170 35 280 25 170-25 120-35 130v78M0 820l60 90 50 50"/></g>
        <g transform="translate(1260 380) scale(.3333)"><path d="M220 0l-40 80 45 20 35 110 5 200 20 235-50 30L0 950l150 40M290 645l90-40 90 45 200-5 130-10 230-90 170-60M700 0l60 100 70 100 100 110 60 80 40 140 60 400M1095 920q30-50 105-60M0 190l80-10 70-50 30-50"/></g>
        <g transform="translate(1600 440) scale(.3333)"><path d="M0 300l15 60 65 380-40 100-20 150M15 360l100-35 140-60 60-60 80-20 60 5 270 45 120-10 50 35 90 60M750 220l40-70 60-80-5-70M690 240 560 380l-80 80-80 80-40 60q-30 40-100 50l-120 35q-40 15-60 60"/></g>
        <g transform="translate(1140 690) scale(.3333)"><path d="M380 0 270 110l-20 140-60 150-40 160L10 740M10 265l180 70 60 20 60 45 140 60q150 70 200 210 40 130 160 170l90 15M375 20l250 80 230 120 150 50 15 25v40l70 70 60 40 50 5M870 180l10 280 25 420 0 60-30 240M920 845l280-12M1160 410v760M1160 630l40 20"/></g>
        <g transform="translate(1520 740) scale(.3333)"><path d="M268 0l-15 190q-50 100-150 110H0M18 270l5 750M0 688l160-12q90-10 160-75l130-105 80-5 200 24q90 10 140-40l80-55 210-65"/></g>
      </g>
      <g fill="#314f88"><path d="M1292 176l20-4-14 16zM1368 324l12-6-4 12-8 2zM1431 265l14-2-2 14-8 4zM1471 230l18 10-10 8zM1512 200l14 18-2 10-10-6zM1202 800l20 10 10 8-32 2zM1226 720l10 8-6 10zM1424 750l8-2v30h-8zM1520 828l8 0v20h-10zM1600 553l12-10 4 6-8 8zM1630 540l12 6-4 10zM1750 583l18 2-10 12zM1435 975l8 8v12zM1430 1070l12-8 4 18h-14z"/></g>

      <!-- labels -->
      <g class="district">
        <text x="1317.500" y="297">BIELANY</text><text x="1414" y="346">ŻOLIBORZ</text><text x="1646.500" y="309">TARGÓWEK</text>
        <text x="1555.500" y="348.500">PRAGA-</text><text x="1555.500" y="359">PÓŁNOC</text><text x="1340.500" y="498">WOLA</text><text x="1610" y="702">MOKOTÓW</text>
        <text x="1685.500" y="481.500">PRAGA-</text><text x="1685.500" y="492">POŁUDNIE</text><text x="1880.500" y="575">WAWER</text><text class="narrow" x="1805.500" y="688.500">KĘPA</text><text class="narrow" x="1805.500" y="698">WIELORYB</text>
        <text x="1321.500" y="740">WŁOCHY</text><text x="1801.500" y="900">WILANÓW</text><text x="1570" y="957.500">URSYNÓW</text>
      </g>
      <g class="town">
        <text x="1206" y="877">Nowe Grocholice</text><text x="1183" y="913.500">County</text><text x="1175" y="977">County</text><text x="1248" y="979">Falenty</text><text x="1219" y="1001.500">Falenty Duże</text><text x="1214.500" y="1046">Laszczki</text>
        <text x="1328" y="933.500">Jaworowa</text><text x="1402" y="970">Dawidy, Pruszków</text><text x="1402" y="984.500">County</text><text x="1343" y="1014.500">Łady, Pruszków</text><text x="1343" y="1029">County</text><text x="1317" y="1051">Podolszyn Nowy</text><text x="1300.500" y="1077.500">Podolszyn</text><text x="1391" y="1074.500">Zamienie,</text>
        <g class="end"><text x="1180.500" y="773">Opacz K</text><text x="1167.500" y="819">owice</text><text x="1231.500" y="899">uchały, Pruszków</text><text x="1217" y="962.500">anki, Pruszków</text><text x="1192.500" y="1072">ocin Nowy</text><text x="1147.500" y="459.500">e</text><text x="1173" y="474">skiego</text></g>
        <g class="start"><text x="1851.500" y="1001.500">Okrzeszyn</text><text x="1874" y="1016">Voivodeship</text></g>
        <text x="1668" y="159" transform="rotate(-5 1668 158)">Toruńska</text>
        <text class="big" x="1816" y="217.500">Ząbki</text><text class="city" x="1494" y="513">Warsaw</text>
      </g>
      <circle cx="1816" cy="224" r="2.200" fill="#fff"/>
      <rect x="1368" y="829" width="16" height="16" fill="#4f7bff"/><path d="M1376.500 831c.8 0 1 .8 1 1.700v3l5 3v1.300l-5-1.400v3.200l1.300 1v1l-2.300-.7-2.300.7v-1l1.300-1v-3.200l-5 1.400v-1.300l5-3v-3c0-.9.2-1.700 1-1.700z" fill="#fff"/>
      <text class="airport" x="1376.500" y="855.500">WAW</text>
      <g class="shield-bg"><rect x="1493" y="222.500" width="18" height="12.500" rx="1.500"/><rect x="1707" y="150.500" width="18" height="12.500" rx="1.500"/><rect x="1291" y="844" width="18" height="12" rx="1.500"/><rect x="1432" y="1012" width="18" height="12" rx="1.500"/><rect x="1675" y="899" width="18" height="12" rx="1.500"/><rect x="1841" y="872" width="18" height="12" rx="1.500"/></g>
      <g class="shield"><text x="1502" y="232">S8</text><text x="1716" y="160.500">S8</text><text x="1300.500" y="853.500">S2</text><text x="1441" y="1021.500">S7</text><text x="1684" y="908.500">S2</text><text x="1850" y="881.500">S2</text></g>
    </svg>

    <div class="pin-mark hr" style="left:220px;top:225px"><svg><use href="#i-hr"/></svg></div>
    <div class="pin-mark design" style="left:436px;top:261px"><svg><use href="#i-design"/></svg></div>
    <div class="pin-mark sales" style="left:312px;top:280px"><svg><use href="#i-sales"/></svg></div>
    <div class="pin-mark marketing" style="left:303px;top:272px"><svg><use href="#i-marketing"/></svg></div>
    <div class="pin-mark marketing" style="left:382px;top:342px"><svg><use href="#i-marketing"/></svg></div>
    <div class="pin-mark marketing" style="left:357px;top:326px"><svg><use href="#i-marketing"/></svg></div>
    <div class="pin-mark engineering" style="left:446px;top:326px"><svg><use href="#i-engineering"/></svg></div>
    <div class="pin-mark engineering" style="left:245px;top:362px"><svg><use href="#i-engineering"/></svg></div>
    <div class="pin-mark finances" style="left:420px;top:372px"><svg><use href="#i-finances"/></svg></div>
    <div class="pin-mark logistics" style="left:350px;top:380px"><svg><use href="#i-logistics"/></svg></div>
    <div class="pin-mark media" style="left:350px;top:368px"><svg><use href="#i-media"/></svg></div>
    <div class="pin-mark sales" style="left:294px;top:409px"><svg><use href="#i-sales"/></svg></div>
    <div class="pin-mark media" style="left:297px;top:378px"><svg><use href="#i-media"/></svg></div>
    <div class="pin-mark hr" style="left:361px;top:372px"><svg><use href="#i-hr"/></svg></div>
    <div class="pin-mark support" style="left:320px;top:392px"><svg><use href="#i-support"/></svg></div>
    <div class="pin-mark finances" style="left:355px;top:425px"><svg><use href="#i-finances"/></svg></div>
    <div class="pin-mark support" style="left:290px;top:453px"><svg><use href="#i-support"/></svg></div>
    <div class="pin-mark design" style="left:146px;top:409px"><svg><use href="#i-design"/></svg></div>
    <div class="pin-mark consulting" style="left:415px;top:502px"><svg><use href="#i-consulting"/></svg></div>
    <div class="pin-mark consulting" style="left:438px;top:474px"><svg><use href="#i-consulting"/></svg></div>
    <div class="pin-mark consulting" style="left:58px;top:515px"><svg><use href="#i-consulting"/></svg></div>
    <div class="pin-mark consulting" style="left:742px;top:326px"><svg><use href="#i-consulting"/></svg></div>
    <div class="pin-mark media" style="left:612px;top:370px"><svg><use href="#i-media"/></svg></div>
    <div class="pin-mark design" style="left:551px;top:440px"><svg><use href="#i-design"/></svg></div>
    <div class="pin-mark hr" style="left:531px;top:411px"><svg><use href="#i-hr"/></svg></div>
    <div class="pin-mark logistics" style="left:53px;top:623px"><svg><use href="#i-logistics"/></svg></div>
    <div class="pin-mark support" style="left:42px;top:697px"><svg><use href="#i-support"/></svg></div>
    <div class="pin-mark logistics" style="left:337px;top:659px"><svg><use href="#i-logistics"/></svg></div>
    <div class="pin-mark engineering" style="left:478px;top:727px"><svg><use href="#i-engineering"/></svg></div>
    <div class="pin-mark design" style="left:622px;top:873px"><svg><use href="#i-design"/></svg></div>
  </section>
</main>
</body>
</html>
```

FILE: styles.css
```css
* { box-sizing: border-box; }

body {
  margin: 0;
  height: 1080px;
  display: flex;
  flex-direction: column;
  overflow: hidden;
  background: #2f3449;
  color: #e6e9f5;
  font-family: "Liberation Sans", Arial, sans-serif;
  font-size: 14px;
}

button { font: inherit; color: inherit; }
.sprite { position: absolute; }

/* Top bar */
.topbar {
  flex: none;
  height: 80px;
  display: flex;
  align-items: center;
  padding: 0 27px 0 16px;
  background: #1b1e2c;
  border-bottom: 1px solid #151722;
}
.brand { display: flex; align-items: center; gap: 11px; width: 318px; }
.brand-name { overflow: visible; }
.brand-name text {
  font-family: Lato, sans-serif;
  font-weight: 700;
  font-size: 24px;
  fill: #fff;
}
.nav { display: flex; gap: 32px; font-weight: 700; color: #e0e4f2; }
.actions { margin-left: auto; display: flex; align-items: center; }
.post { display: flex; align-items: center; gap: 9px; font-size: 16px; font-weight: 700; color: #f0f2fa; }
.signin {
  display: flex;
  align-items: center;
  justify-content: center;
  gap: 11px;
  width: 109px;
  height: 40px;
  margin: 0 32px 0 31px;
  padding: 0 0 1px;
  border: 0;
  border-radius: 6px;
  background: #567bff;
  color: #fff;
  font-weight: 700;
}
.burger { display: flex; flex-direction: column; gap: 4px; width: 20px; margin-left: 29px; }
.burger i { height: 2px; background: #fff; }

/* Category chips */
.chips { flex: none; display: flex; gap: 8px; padding: 15px 20px 23px; }
.chip {
  display: flex;
  align-items: center;
  gap: 8px;
  height: 36px;
  padding: 0 15px;
  border-radius: 10px;
  font-weight: 700;
  color: #fff;
  white-space: nowrap;
  background: linear-gradient(100deg, var(--stops));
}
.chip svg { width: 20px; height: 20px; flex: none; }

.marketing { --stops: #ff0055, #ea0090 75%, #d91bb0; }
.sales { --stops: #ff9d00, #f3b300 40%, #e3d540; }
.finances { --stops: #3f74f2, #7bb0ff; }
.engineering { --stops: #24333a, #5c6b70; }
.design { --stops: #f24e18, #ff6d30 40%, #ff9f60; }
.hr { --stops: #4b14ad, #8866f8; }
.logistics { --stops: #009c9c, #00e8cc; }
.consulting { --stops: #717b96, #9da8c0; }
.bi { --stops: #0088a3, #00b2de; }
.pm { --stops: #e0930f, #e8d012; }
.media { --stops: #ff2f55, #ff8890; }
.support { --stops: #8d009e, #c400cf 70%, #dc12ec; }
.seo { --stops: #00ab62, #08c477 50%, #35e595; }
.law { --stops: #5aa3b0, #78d5e5; }
.other { --stops: #8d00ff, #a800ff 50%, #c46cff; }
.it { --stops: #ff007c, #ff0090 40%, #ff70b8; }

/* Listing */
.content { flex: 1; min-height: 0; display: flex; justify-content: space-between; padding: 0 1px 0 20px; }
.listing { width: 1103px; }
.filters { display: flex; gap: 8px; height: 40px; margin-bottom: 23px; font-size: 13px; }
.search, .filter {
  display: flex;
  align-items: center;
  padding: 0;
  border: 1px solid #4b5169;
  border-radius: 10px;
  background: none;
}
.search { width: 320px; padding-left: 11px; gap: 12px; }
.filter { font-weight: 700; padding-bottom: 2px; }
.location { width: 116px; padding-left: 16px; gap: 8px; }
.more { width: 132px; padding-left: 18px; gap: 10px; }
.sort { width: 124px; padding-left: 18px; gap: 10px; }
.caret { margin-left: 5px; color: #555c75; }

.jobs { display: flex; flex-direction: column; gap: 8px; }
.job {
  display: flex;
  align-items: center;
  height: 92px;
  padding: 0 10px 0 20px;
  border: 1px solid #454c66;
  border-radius: 5px;
  background: #1b1e2c;
  box-shadow: 0 1px 4px rgba(20, 22, 34, .35);
}
.logo { flex: none; background: #fff; overflow: hidden; }
.info { margin-left: 30px; padding-bottom: 3px; }
.info h2 { margin: 0 0 11px; font-size: 20px; line-height: 24px; font-weight: 400; color: #f0f2f8; }
.info p { display: flex; align-items: center; height: 20px; margin: 0; font-size: 13px; color: #6e7794; }
.info p svg { width: 16px; height: 16px; margin-right: 5px; }
.info p .pin { margin-left: 16px; }
.side { margin-left: auto; display: flex; flex-direction: column; align-items: flex-end; gap: 13px; padding-top: 3px; }
.side strong { margin-right: 10px; line-height: 16px; color: #ff2f5b; }
.tags { display: flex; gap: 8px; }
.tags span {
  height: 26px;
  padding: 0 5px;
  border: 1px solid #dfe4f2;
  border-radius: 9px;
  background: #4a516a;
  font-size: 11px;
  line-height: 24px;
  color: #eceffa;
}

/* Map */
.map { position: relative; width: 762px; overflow: hidden; }
.tiles { display: block; }
.tiles text {
  font-family: Roboto, sans-serif;
  text-anchor: middle;
  paint-order: stroke;
  stroke: #1a1f30;
  stroke-width: 2px;
  stroke-linejoin: round;
}
.tiles .district text { font-size: 9.800px; font-weight: 500; letter-spacing: 1.300px; fill: #bfc0bd; }
.tiles .district .narrow { font-size: 9px; letter-spacing: 1px; }
.tiles .town text { font-size: 11.700px; fill: #d3d3d1; }
.tiles .town .end text { text-anchor: end; }
.tiles .town .start text { text-anchor: start; }
.tiles .town .big { font-size: 15.500px; fill: #e0e0e0; }
.tiles .town .city { font-size: 22px; font-weight: 500; fill: #f2f2f2; }
.tiles .airport { font-size: 11px; font-weight: 500; fill: #5578f0; }
.shield-bg { fill: #f4f4f4; stroke: #3a3f50; stroke-width: .6; }
.tiles .shield text { font-size: 9.500px; fill: #333; stroke: none; }

.pin-mark {
  position: absolute;
  display: flex;
  align-items: center;
  justify-content: center;
  width: 50px;
  height: 50px;
  margin: -25px 0 0 -25px;
  border: 5px solid rgba(255, 255, 255, .4);
  border-radius: 50%;
  color: #fff;
  background: linear-gradient(180deg, var(--stops)) padding-box;
}
.pin-mark svg { width: 20px; height: 20px; }
```
